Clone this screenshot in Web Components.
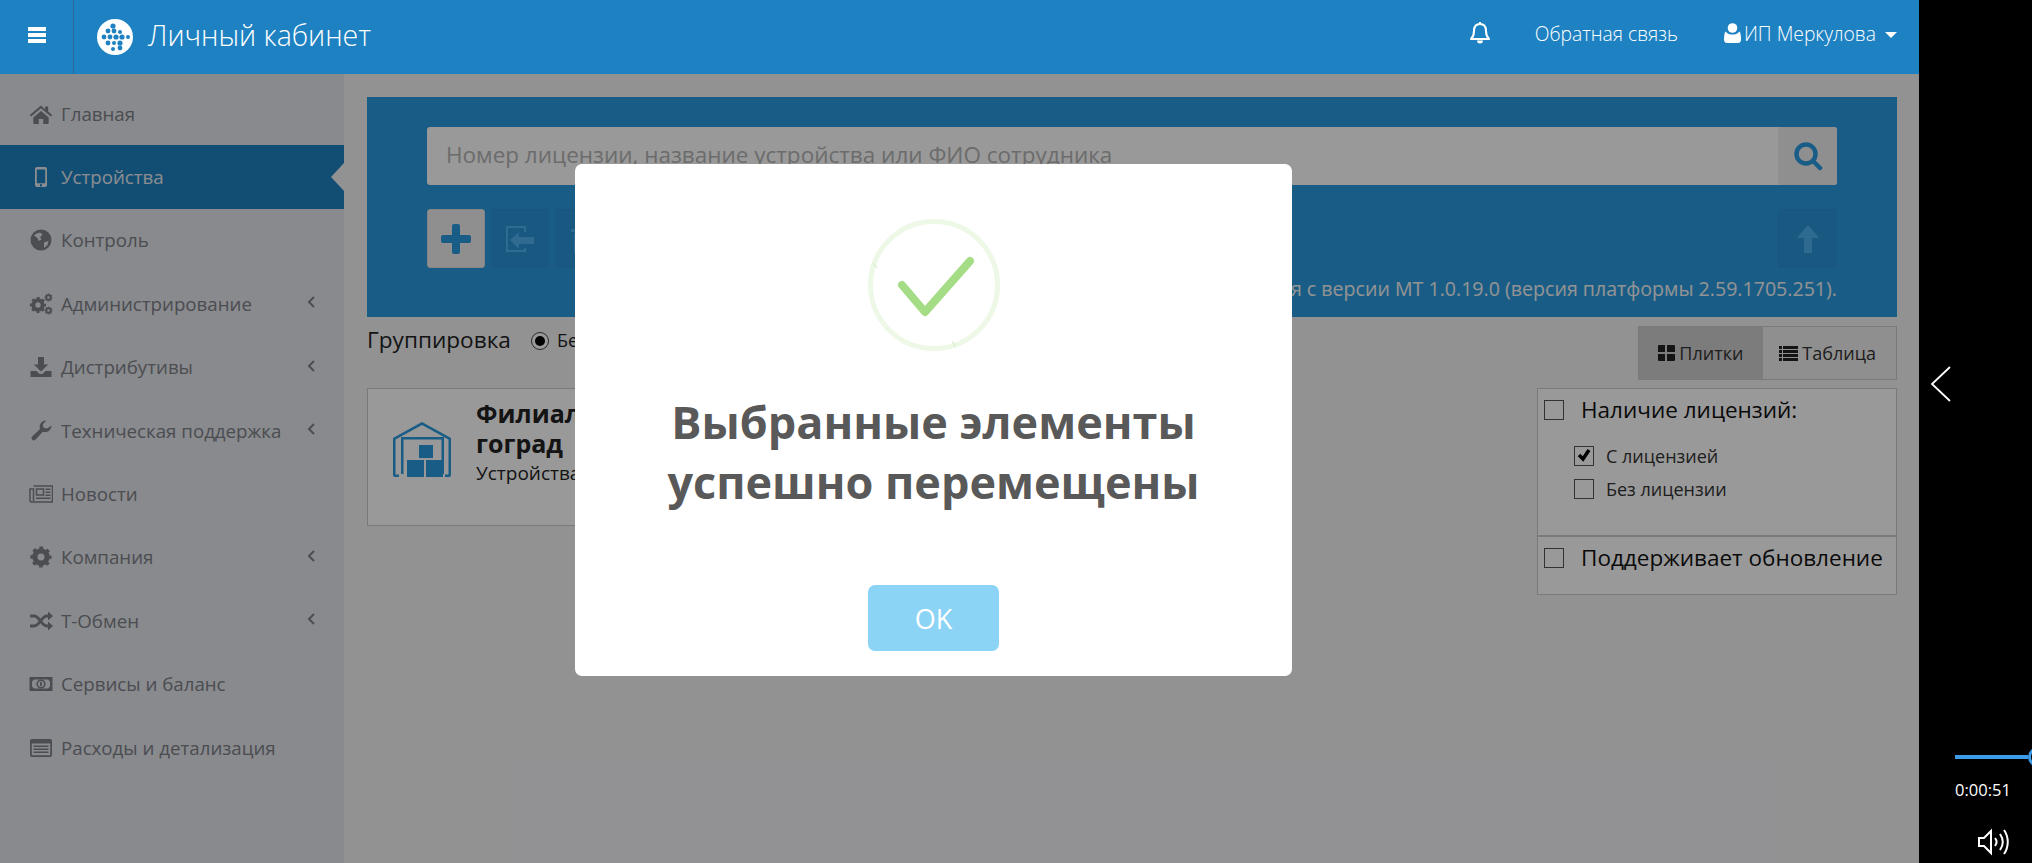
<!DOCTYPE html>
<html lang="ru">
<head>
<meta charset="utf-8">
<title>Личный кабинет</title>
<style>
html, body { margin: 0; height: 100%; overflow: hidden; background: #000; }
body { font-family: "Open Sans", "Liberation Sans", sans-serif; }
</style>
</head>
<body>
<kit-page>
  <app-header slot="header"></app-header>
  <side-nav slot="nav">
    <nav-item icon="home" label="Главная"></nav-item>
    <nav-item icon="mobile" label="Устройства" active></nav-item>
    <nav-item icon="globe" label="Контроль"></nav-item>
    <nav-item icon="cogs" label="Администрирование" more></nav-item>
    <nav-item icon="download" label="Дистрибутивы" more></nav-item>
    <nav-item icon="wrench" label="Техническая поддержка" more></nav-item>
    <nav-item icon="news" label="Новости"></nav-item>
    <nav-item icon="cog" label="Компания" more></nav-item>
    <nav-item icon="random" label="Т-Обмен" more></nav-item>
    <nav-item icon="money" label="Сервисы и баланс"></nav-item>
    <nav-item icon="listalt" label="Расходы и детализация"></nav-item>
  </side-nav>
  <search-panel slot="main"></search-panel>
  <group-bar slot="main"></group-bar>
  <device-area slot="main">
    <branch-card slot="card"></branch-card>
    <filter-box slot="filter"></filter-box>
  </device-area>
  <alert-modal slot="modal" message-a="Выбранные элементы" message-b="успешно перемещены"></alert-modal>
  <player-rail slot="rail"></player-rail>
</kit-page>

<script>
// gear drawn from two rings, the outer one dashed gives the teeth
function gear(cx, cy, r) {
  const c = 2 * Math.PI * r * 0.86;
  const d = c / 16;
  return `<circle cx="${cx}" cy="${cy}" r="${r * 0.58}" fill="none" stroke="currentColor" stroke-width="${r * 0.5}"/>` +
    `<circle cx="${cx}" cy="${cy}" r="${r * 0.86}" fill="none" stroke="currentColor" stroke-width="${r * 0.3}" stroke-dasharray="${d} ${d}" stroke-dashoffset="${d / 2}"/>`;
}

const ICONS = {
  home: '<path d="M12 3.500.8 13l1.300 1.600L12 6.300l9.900 8.300 1.300-1.600-4-3.400V4.600h-3.100v2.800z"/><path d="M4.300 15.400 12 8.900l7.700 6.500v5.700a.8.8 0 0 1-.8.8h-4.700v-5h-4.400v5H5.100a.8.8 0 0 1-.8-.8z"/>',
  mobile: '<path fill-rule="evenodd" d="M8 2h8a2 2 0 0 1 2 2v16a2 2 0 0 1-2 2H8a2 2 0 0 1-2-2V4a2 2 0 0 1 2-2zM7.800 4.600v13.600h8.400V4.600zM12 19a1.200 1.200 0 1 0 0 2.400 1.200 1.200 0 0 0 0-2.400z"/>',
  globe: '<path fill-rule="evenodd" d="M12 1.500a10.500 10.500 0 1 0 0 21 10.500 10.500 0 0 0 0-21zM5 7.500c2-2 5-3.500 7-2.500l1.500 2-2.500 2 1.500 2.500-3 1.500-1-3zM15 14.500l4.500-1.500-1 4-3.500 3z"/>',
  cogs: gear(9, 13, 8) + gear(19.5, 5.5, 4) + gear(19.5, 18.5, 4),
  download: '<path d="M9 2h6v7.500h4.200L12 16.500 4.800 9.500H9z"/><path d="M1.500 16h6l3 3h3l3-3h6v6h-21z"/>',
  wrench: '<path d="M22.500 6.500a6.500 6.500 0 0 1-8.700 6.200l-7.400 8a2.300 2.300 0 0 1-3.300-3.200l7.900-7.400A6.500 6.500 0 0 1 17.500 1.500l-3.700 3.700.7 3.600 3.700.8z"/>',
  news: '<g fill="none" stroke="currentColor" stroke-width="1.500"><path d="M4.500 4h19v16H2.500A1.500 1.500 0 0 1 1 18.500V7h3.500v12"/><rect x="7.500" y="7" width="7" height="6"/></g><path d="M16.500 6.500h5V8h-5zM16.500 9.500h5V11h-5zM16.500 12.500h5V14h-5zM7 15.500h14.500V17H7z"/>',
  cog: gear(12, 12, 10.5),
  random: '<g fill="none" stroke="currentColor" stroke-width="3"><path d="M1 7h4c6 0 7 10 13 10h2"/><path d="M1 17h4c6 0 7-10 13-10h2"/></g><path d="M19 2.500 24 7l-5 4.500zM19 12.500l5 4.500-5 4.500z"/>',
  money: '<path fill-rule="evenodd" d="M.5 5h23v14H.5zM5 7.500 3 9.500v5l2 2h14l2-2v-5l-2-2z"/><circle cx="12" cy="12" r="3.800" fill="none" stroke="currentColor" stroke-width="1.600"/><path d="M11 10h1.800v4H11z"/>',
  listalt: '<path fill-rule="evenodd" d="M3 3h18a2 2 0 0 1 2 2v14a2 2 0 0 1-2 2H3a2 2 0 0 1-2-2V5a2 2 0 0 1 2-2zM2.800 7.500v11.700h18.400V7.500z"/><path d="M4.500 9.500H19.500V11H4.500zM4.500 12.500H19.500V14H4.500zM4.500 15.500H19.500V17H4.500z"/>'
};

class FaIcon extends HTMLElement {
  connectedCallback() {
    const size = this.getAttribute("size") || 24;
    this.attachShadow({ mode: "open" }).innerHTML = `
      <style>:host { display: block; width: ${size}px; height: ${size}px; } svg { display: block; fill: currentColor; }</style>
      <svg width="${size}" height="${size}" viewBox="0 0 24 24">${ICONS[this.getAttribute("name")]}</svg>`;
  }
}
customElements.define("fa-icon", FaIcon);

const pageTpl = document.createElement("template");
pageTpl.innerHTML = `
<style>
:host { display: grid; grid-template-columns: 1919px 113px; height: 863px; position: relative; overflow: hidden; }
.app { display: grid; grid-template-rows: 74px 789px; background: #f3f3f6; position: relative; overflow: hidden; }
.top { position: relative; z-index: 3; }
.body { display: grid; grid-template-columns: 344px 1fr; }
.main { padding: 23px 22px 0 23px; min-width: 0; }
</style>
<div class="app">
  <div class="top"><slot name="header"></slot></div>
  <div class="body">
    <slot name="nav"></slot>
    <div class="main"><slot name="main"></slot></div>
  </div>
  <slot name="modal"></slot>
</div>
<slot name="rail"></slot>`;
class KitPage extends HTMLElement {
  constructor() {
    super();
    this.attachShadow({ mode: "open" }).appendChild(pageTpl.content.cloneNode(true));
  }
}
customElements.define("kit-page", KitPage);

const headerTpl = document.createElement("template");
headerTpl.innerHTML = `
<style>
:host { display: flex; align-items: center; height: 74px; background: #1e82c2; color: #fff; font-family: "Open Sans", sans-serif; }
.burger { width: 74px; height: 74px; box-sizing: border-box; border-right: 1px solid #2a6a95; display: flex; flex-direction: column; justify-content: center; align-items: center; gap: 2.500px; flex: none; padding-bottom: 4px; }
.burger i { display: block; width: 18px; height: 3.500px; background: #fff; }
.logo { margin-left: 22px; flex: none; }
.title { margin-left: 14px; font-size: 28.500px; font-weight: 300; padding-bottom: 5px; }
.right { margin-left: auto; display: flex; align-items: center; font-size: 19.300px; font-weight: 300; padding-right: 22px; padding-bottom: 8px; }
.bell { margin-right: 45px; display: block; }
.user { margin-left: 46px; display: flex; align-items: center; gap: 3px; }
.caret { margin-left: 6px; width: 0; height: 0; border-left: 6px solid transparent; border-right: 6px solid transparent; border-top: 6px solid #fff; margin-top: 3px; }
svg { display: block; }
</style>
<div class="burger"><i></i><i></i><i></i></div>
<svg class="logo" width="38" height="38" viewBox="0 0 38 38">
  <circle cx="19" cy="19" r="18" fill="#fff"/>
  <g fill="#1e82c2">
    <circle cx="17" cy="8" r="2.600"/>
    <circle cx="12" cy="13" r="2.400"/><circle cx="18" cy="13" r="2.400"/><circle cx="24" cy="14" r="2"/>
    <circle cx="8" cy="19" r="2.400"/><circle cx="14" cy="19" r="2.400"/><circle cx="20" cy="19" r="2.600"/><circle cx="26" cy="19" r="2.600"/><circle cx="32" cy="19" r="2"/>
    <circle cx="12" cy="25" r="2.400"/><circle cx="18" cy="25" r="2"/><circle cx="24" cy="25" r="2.600"/>
    <circle cx="17" cy="31" r="2"/><circle cx="24" cy="30" r="2.400"/>
  </g>
</svg>
<span class="title">Личный кабинет</span>
<div class="right">
  <svg class="bell" width="20" height="22" viewBox="0 0 20 22" fill="none" stroke="#fff" stroke-width="2">
    <path d="M1 17c2-2 3-4 3-8s2-7 6-7 6 3 6 7 1 6 3 8z" stroke-linejoin="round"/>
    <path d="M7 18.500a3 3 0 0 0 6 0z" fill="#fff" stroke="none"/>
    <path d="M10 0v2"/>
  </svg>
  <span>Обратная связь</span>
  <span class="user">
    <svg width="17" height="20" viewBox="0 0 17 20" fill="#fff"><circle cx="8.500" cy="5" r="4.800"/><path d="M1.500 8.500c2 2.500 4.500 3 7 3s5-.5 7-3c1 1 1.500 4 1.500 8 0 2-1 3.500-3 3.500H3c-2 0-3-1.500-3-3.500 0-4 .5-7 1.500-8z"/></svg>
    <span>ИП Меркулова</span>
    <i class="caret"></i>
  </span>
</div>`;
class AppHeader extends HTMLElement {
  constructor() {
    super();
    this.attachShadow({ mode: "open" }).appendChild(headerTpl.content.cloneNode(true));
  }
}
customElements.define("app-header", AppHeader);

const navTpl = document.createElement("template");
navTpl.innerHTML = `
<style>
:host { display: block; background: #e4e6eb; padding-top: 8px; height: 781px; }
</style>
<slot></slot>`;
class SideNav extends HTMLElement {
  constructor() {
    super();
    this.attachShadow({ mode: "open" }).appendChild(navTpl.content.cloneNode(true));
  }
}
customElements.define("side-nav", SideNav);

class NavItem extends HTMLElement {
  connectedCallback() {
    const active = this.hasAttribute("active");
    this.attachShadow({ mode: "open" }).innerHTML = `
      <style>
      :host { display: flex; align-items: center; gap: 8px; height: 63.400px; padding-left: 29px; box-sizing: border-box; position: relative;
        font: 400 18.700px "Open Sans", sans-serif; color: ${active ? "#e8ecf0" : "#7d8088"}; background: ${active ? "#1e82c2" : "transparent"}; }
      .label { padding-bottom: 1px; }
      .more { position: absolute; left: 304px; top: 21px; }
      .notch { position: absolute; right: 0; top: 18px; width: 0; height: 0; border-top: 14px solid transparent; border-bottom: 14px solid transparent; border-right: 13px solid #f3f3f6; }
      </style>
      <fa-icon name="${this.getAttribute("icon")}"></fa-icon>
      <span class="label">${this.getAttribute("label")}</span>
      ${this.hasAttribute("more") ? '<svg class="more" width="14" height="18" viewBox="0 0 14 18" fill="none" stroke="currentColor" stroke-width="2"><path d="M10 4 5 9l5 5"/></svg>' : ""}
      ${active ? '<i class="notch"></i>' : ""}`;
  }
}
customElements.define("nav-item", NavItem);

const searchTpl = document.createElement("template");
searchTpl.innerHTML = `
<style>
:host { display: block; height: 220px; box-sizing: border-box; padding: 30px 60px 0; background: #2b9be1; font-family: "Open Sans", sans-serif; }
.search { display: flex; height: 58px; border-radius: 3px; overflow: hidden; background: #fff; }
.query { flex: 1; padding-left: 19px; font-size: 22.500px; line-height: 56px; color: #b4b4b4; white-space: nowrap; }
.go { width: 59px; background: #eee; display: flex; align-items: center; justify-content: center; }
.tools { display: flex; gap: 6px; margin-top: 24px; }
.btn { width: 58px; height: 59px; box-sizing: border-box; border-radius: 3px; display: flex; align-items: center; justify-content: center; }
.btn.on { background: #eee; border: 1px solid #ddd; }
.btn.off { background: #2a93d6; border: 1px solid #2890d2; }
.btn.up { margin-left: auto; width: 59px; }
.version { margin-top: 7px; text-align: right; font-size: 19.600px; line-height: 28px; color: #f5f5f5; white-space: nowrap; }
svg { display: block; }
</style>
<div class="search">
  <div class="query">Номер лицензии, название устройства или ФИО сотрудника</div>
  <div class="go">
    <svg width="30" height="32" viewBox="0 0 30 32" fill="none" stroke="#2b9be1" stroke-width="4.500" stroke-linecap="round"><circle cx="13" cy="14" r="9.500"/><path d="M20 21l7 7"/></svg>
  </div>
</div>
<div class="tools">
  <div class="btn on">
    <svg width="30" height="30" viewBox="0 0 30 30" fill="#2b9be1"><path d="M11 2a2 2 0 0 1 2-2h4a2 2 0 0 1 2 2v9h9a2 2 0 0 1 2 2v4a2 2 0 0 1-2 2h-9v9a2 2 0 0 1-2 2h-4a2 2 0 0 1-2-2v-9H2a2 2 0 0 1-2-2v-4a2 2 0 0 1 2-2h9z"/></svg>
  </div>
  <div class="btn off">
    <svg width="30" height="28" viewBox="0 0 30 28" fill="none" stroke="#4fb1f2" stroke-width="2"><path d="M20 7V2H2v24h18v-3"/><path d="M5 15l9-8v5h15v7H14v5z" fill="#4fb1f2" stroke="none"/></svg>
  </div>
  <div class="btn off">
    <svg width="30" height="28" viewBox="0 0 30 28" fill="#4fb1f2"><path d="M2 4h5V1h16v3h5v3H2zM5 9h20v19H5z"/></svg>
  </div>
  <div class="btn off up">
    <svg width="22" height="28" viewBox="0 0 22 28" fill="#4fb1f2"><path d="M11 0l11 13h-7v15H7V13H0z"/></svg>
  </div>
</div>
<div class="version">Поддерживается с версии МТ 1.0.19.0 (версия платформы 2.59.1705.251).</div>`;
class SearchPanel extends HTMLElement {
  constructor() {
    super();
    this.attachShadow({ mode: "open" }).appendChild(searchTpl.content.cloneNode(true));
  }
}
customElements.define("search-panel", SearchPanel);

const groupTpl = document.createElement("template");
groupTpl.innerHTML = `
<style>
:host { display: flex; align-items: flex-start; margin-top: 9px; height: 54px; font-family: "Open Sans", sans-serif; color: #222; }
.caption { font-size: 22.600px; line-height: 28px; }
.radio { margin-left: 20px; margin-top: 6px; width: 18px; height: 18px; box-sizing: border-box; border: 1px solid #444; border-radius: 50%; background: #fff; display: flex; align-items: center; justify-content: center; }
.radio i { width: 10px; height: 10px; background: #000; border-radius: 50%; }
.opt { margin-left: 8px; font-size: 18px; line-height: 28px; }
.tabs { margin-left: auto; display: flex; height: 54px; box-sizing: border-box; border: 1px solid #ccc; font-size: 18px; color: #333; background: #efefef; }
.tab { display: flex; align-items: center; gap: 4px; padding: 0 20px 0 16px; }
.tab.on { background: #cfcfcf; width: 124px; box-sizing: border-box; padding: 0 0 0 19px; }
svg { display: block; }
</style>
<span class="caption">Группировка</span>
<span class="radio"><i></i></span>
<span class="opt">Без группировки</span>
<div class="tabs">
  <div class="tab on">
    <svg width="17" height="16" viewBox="0 0 17 16" fill="#222"><path d="M0 1a1 1 0 0 1 1-1h6v7H0zM9 0h7a1 1 0 0 1 1 1v6H9zM0 9h7v7H1a1 1 0 0 1-1-1zM9 9h8v6a1 1 0 0 1-1 1H9z"/></svg>
    <span>Плитки</span>
  </div>
  <div class="tab">
    <svg width="19" height="15" viewBox="0 0 19 15" fill="#222"><path d="M0 0h3v3H0zM4 0h15v3H4zM0 4h3v3H0zM4 4h15v3H4zM0 8h3v3H0zM4 8h15v3H4zM0 12h3v3H0zM4 12h15v3H4z"/></svg>
    <span>Таблица</span>
  </div>
</div>`;
class GroupBar extends HTMLElement {
  constructor() {
    super();
    this.attachShadow({ mode: "open" }).appendChild(groupTpl.content.cloneNode(true));
  }
}
customElements.define("group-bar", GroupBar);

const areaTpl = document.createElement("template");
areaTpl.innerHTML = `
<style>
:host { display: flex; justify-content: space-between; align-items: flex-start; margin-top: 8px; }
</style>
<slot name="card"></slot>
<slot name="filter"></slot>`;
class DeviceArea extends HTMLElement {
  constructor() {
    super();
    this.attachShadow({ mode: "open" }).appendChild(areaTpl.content.cloneNode(true));
  }
}
customElements.define("device-area", DeviceArea);

const cardTpl = document.createElement("template");
cardTpl.innerHTML = `
<style>
:host { display: flex; width: 700px; height: 138px; box-sizing: border-box; border: 1px solid #ccc; background: #fff; font-family: "Open Sans", sans-serif; color: #222; }
svg { display: block; margin: 33px 0 0 25px; flex: none; }
.text { margin-left: 23px; padding-top: 9px; }
.name { font-size: 25px; font-weight: 700; line-height: 30px; }
.sub { font-size: 19px; line-height: 31px; }
</style>
<svg width="60" height="56" viewBox="0 0 60 56" fill="#2b9be1">
  <path d="M29 0 58 16v37a2 2 0 0 1-2 2h-4v-2.500h3.500V17.500L29 3 2.500 17.500v35H6V55H2a2 2 0 0 1-2-2V16z"/>
  <path d="M8 15h43v37h-2.500V17.500h-38V52H8z"/>
  <path d="M26 23h14v13H26zM14 38h17v17H14zM33 38h17v17H33z"/>
</svg>
<div class="text">
  <div class="name">Филиал<br>гоград</div>
  <div class="sub">Устройства</div>
</div>`;
class BranchCard extends HTMLElement {
  constructor() {
    super();
    this.attachShadow({ mode: "open" }).appendChild(cardTpl.content.cloneNode(true));
  }
}
customElements.define("branch-card", BranchCard);

const filterTpl = document.createElement("template");
filterTpl.innerHTML = `
<style>
:host { display: block; width: 360px; font-family: "Open Sans", sans-serif; color: #111; }
.sect { box-sizing: border-box; border: 1px solid #ccc; background: #fff; padding: 11px 0 0 6px; }
.sect.a { height: 148px; }
.sect.b { height: 60px; border-top-width: 2px; margin-top: -1px; }
.head { display: flex; align-items: center; gap: 17px; font-size: 22.500px; line-height: 20px; }
.row { display: flex; align-items: center; gap: 12px; font-size: 18px; line-height: 20px; margin: 13px 0 0 30px; color: #333; }
.head + .row { margin-top: 26px; }
.box { width: 20px; height: 20px; box-sizing: border-box; border: 1px solid #555; background: #fff; flex: none; display: block; }
.box svg { display: block; }
</style>
<div class="sect a">
  <div class="head"><span class="box"></span><span>Наличие лицензий:</span></div>
  <div class="row"><span class="box"><svg width="18" height="18" viewBox="0 0 18 18" fill="none" stroke="#000" stroke-width="3.500"><path d="M4 8l4 4 6-9"/></svg></span><span>С лицензией</span></div>
  <div class="row"><span class="box"></span><span>Без лицензии</span></div>
</div>
<div class="sect b">
  <div class="head"><span class="box"></span><span>Поддерживает обновление</span></div>
</div>`;
class FilterBox extends HTMLElement {
  constructor() {
    super();
    this.attachShadow({ mode: "open" }).appendChild(filterTpl.content.cloneNode(true));
  }
}
customElements.define("filter-box", FilterBox);

class AlertModal extends HTMLElement {
  connectedCallback() {
    this.attachShadow({ mode: "open" }).innerHTML = `
      <style>
      :host { position: absolute; inset: 74px 0 0 0; background: rgba(0,0,0,.4); z-index: 2; }
      .dialog { position: absolute; left: 575px; top: 90px; width: 717px; height: 512px; box-sizing: border-box; padding-top: 55px; background: #fff; border-radius: 7px; display: flex; flex-direction: column; align-items: center; font-family: "Open Sans", sans-serif; }
      svg { display: block; }
      h2 { margin: 41px 0 0; font-size: 45px; line-height: 60px; font-weight: 700; color: #595959; text-align: center; }
      .ok { margin-top: 73px; width: 131px; height: 66px; border-radius: 7px; background: #8cd4f5; color: #fff; font-size: 27px; display: flex; align-items: center; justify-content: center; }
      </style>
      <div class="dialog">
        <svg width="132" height="132" viewBox="0 0 132 132" fill="none">
          <circle cx="66" cy="66" r="63.500" stroke="#edf8e7" stroke-width="5"/>
          <path d="M5 44l4 5M84 122l3 5" stroke="#cfeabf" stroke-width="1"/>
          <path d="M34 66l23 27 45-51" stroke="#a5dc86" stroke-width="8" stroke-linecap="round" stroke-linejoin="round"/>
        </svg>
        <h2>${this.getAttribute("message-a")}<br>${this.getAttribute("message-b")}</h2>
        <div class="ok">OK</div>
      </div>`;
  }
}
customElements.define("alert-modal", AlertModal);

const railTpl = document.createElement("template");
railTpl.innerHTML = `
<style>
:host { display: flex; flex-direction: column; background: #000; color: #fff; font-family: "Open Sans", sans-serif; height: 863px; overflow: hidden; }
svg { display: block; }
.back { margin: 366px 0 0 11px; }
.bar { display: flex; align-items: center; margin: 345px 0 0 36px; height: 20px; }
.bar i { display: block; width: 73px; height: 4px; background: #3d9be8; flex: none; }
.bar b { display: block; width: 20px; height: 20px; box-sizing: border-box; flex: none; border: 3px solid #3d9be8; border-radius: 50%; }
.time { margin: 12px 0 0 36px; font-size: 16.500px; line-height: 22px; }
.vol { margin: 27px 0 0 58px; }
</style>
<svg class="back" width="22" height="36" viewBox="0 0 22 36" fill="none" stroke="#fff" stroke-width="1.800"><path d="M20 1 2 18l18 17"/></svg>
<div class="bar"><i></i><b></b></div>
<div class="time">0:00:51</div>
<svg class="vol" width="32" height="28" viewBox="0 0 32 28" fill="none" stroke="#fff" stroke-width="2"><path d="M2 10h5l7-7v22l-7-7H2z"/><path d="M18 10c2 2.500 2 5.500 0 8M23 6c3.500 5 3.500 11 0 16M27 2c5 7 5 17 0 24"/></svg>`;
class PlayerRail extends HTMLElement {
  constructor() {
    super();
    this.attachShadow({ mode: "open" }).appendChild(railTpl.content.cloneNode(true));
  }
}
customElements.define("player-rail", PlayerRail);
</script>
</body>
</html>
